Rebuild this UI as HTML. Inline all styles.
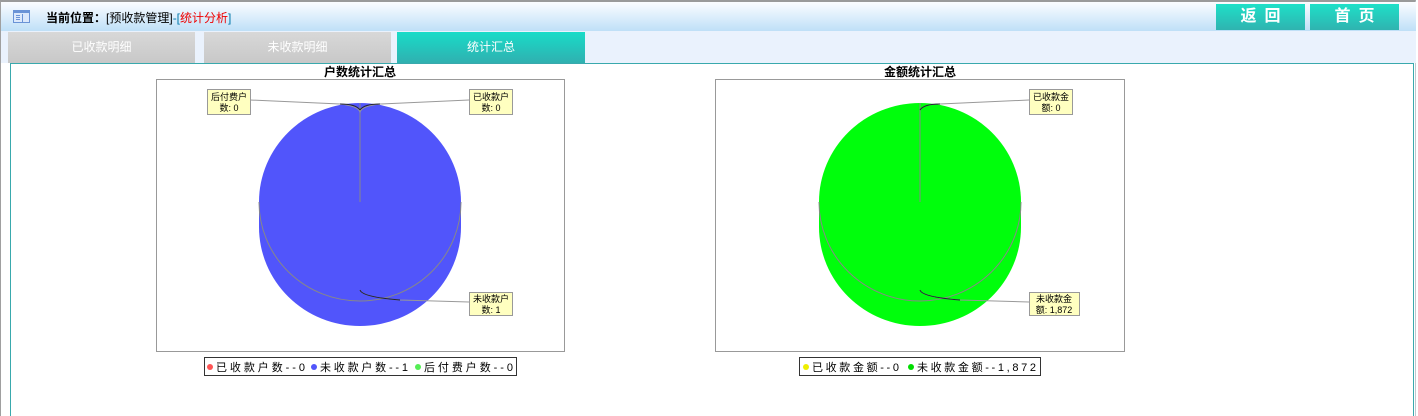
<!DOCTYPE html>
<html style="height:416px;overflow:hidden"><head><meta charset="utf-8"><style>
body{margin:0;width:1418px;height:416px;overflow:hidden;background:#fff;font-family:"Liberation Sans","Noto Sans CJK SC",sans-serif;position:relative}
.frame{position:absolute;left:0;top:0;width:1416px;height:416px;border-left:1px solid #a0a0a0;border-right:1px solid #c0c8d0;border-top:2px solid #9a9a9a;box-sizing:border-box}
.hdr{position:absolute;left:1px;top:2px;width:1415px;height:29px;background:linear-gradient(#fbfdff,#d7ebfb 60%,#bfe0f7)}
.loc{position:absolute;left:46px;top:9px;font-size:12px;color:#000}
.btn{position:absolute;top:4px;width:89px;height:26px;background:linear-gradient(#1ee0c8,#2fb3b0);color:#fff;font-size:16px;font-weight:bold;text-align:center;line-height:26px;letter-spacing:8px;text-indent:8px}
.bar{position:absolute;left:1px;top:31px;width:1415px;height:32px;background:#eaf2fd}
.tab{position:absolute;top:32px;height:31px;width:187px;text-align:center;line-height:30px;font-size:12px;color:#fff;background:linear-gradient(#d8d8d8,#c8c8c8)}
.box{position:absolute;left:10px;top:63px;width:1404px;height:353px;border:1px solid #39a9ad;border-bottom:none;box-sizing:border-box;background:#fff}
</style></head><body>
<div class="frame"></div>
<div class="hdr"></div>
<svg style="position:absolute;left:13px;top:10px" width="18" height="14"><rect x="0.5" y="0.5" width="16" height="12" fill="#dbe8fb" stroke="#6a93d6"/><rect x="1" y="1" width="15" height="2" fill="#6a93d6"/><rect x="3" y="5" width="4" height="1" fill="#6a93d6"/><rect x="3" y="7" width="4" height="1" fill="#6a93d6"/><rect x="3" y="9" width="4" height="1" fill="#6a93d6"/><rect x="9" y="4" width="1" height="8" fill="#6a93d6"/></svg>
<div class="loc"><b>当前位置：</b>[预收款管理]<span style="color:#07a">-[</span><span style="color:#e00">统计分析</span><span style="color:#07a">]</span></div>
<div class="btn" style="left:1216px">返回</div>
<div class="btn" style="left:1310px">首页</div>
<div class="bar"></div>
<div class="tab" style="left:8px">已收款明细</div>
<div class="tab" style="left:204px">未收款明细</div>
<div class="tab" style="left:397px;width:188px;background:linear-gradient(#18dcc8,#30b0b0)">统计汇总</div>
<div class="box"></div>
<svg style="position:absolute;left:0;top:0" width="1418" height="416" font-family="Liberation Sans,Noto Sans CJK SC,sans-serif">
<g>
<text x="360" y="76" font-size="12" font-weight="bold" text-anchor="middle">户数统计汇总</text>
<rect x="156.5" y="79.5" width="408" height="272" fill="#fff" stroke="#999"/>
<path d="M259 202 A101 99 0 0 1 461 202 L461 227 A101 99 0 0 1 259 227 Z" fill="#5155fb"/>
<path d="M259 202 A101 99 0 0 0 461 202" fill="none" stroke="#888" stroke-width="1"/>
<line x1="360" y1="103" x2="360" y2="202" stroke="#888"/>
<path d="M250 100 L340 104 Q358 106 360 112 Q362 106 380 104 L469 100" fill="none" stroke="#999"/>
<path d="M360 110 Q356 104 340 104 M360 110 Q364 104 380 104" fill="none" stroke="#223"/>
<path d="M360 290 Q362 297 400 300 L469 302" fill="none" stroke="#999"/>
<path d="M360 290 Q362 297 400 300" fill="none" stroke="#223"/>
<rect x="207.5" y="89.5" width="43" height="25" fill="#ffffc0" stroke="#999"/>
<text x="229" y="100" font-size="9" text-anchor="middle">后付费户</text><text x="229" y="111" font-size="9" text-anchor="middle">数: 0</text>
<rect x="469.5" y="89.5" width="43" height="25" fill="#ffffc0" stroke="#999"/>
<text x="491" y="100" font-size="9" text-anchor="middle">已收款户</text><text x="491" y="111" font-size="9" text-anchor="middle">数: 0</text>
<rect x="469.5" y="292.5" width="43" height="23" fill="#ffffc0" stroke="#999"/>
<text x="491" y="302" font-size="9" text-anchor="middle">未收款户</text><text x="491" y="313" font-size="9" text-anchor="middle">数: 1</text>
<rect x="204.5" y="357.5" width="312" height="18" fill="#fff" stroke="#333"/>
<circle cx="210" cy="367" r="3" fill="#f55"/><text x="216" y="371" font-size="11" textLength="89" lengthAdjust="spacing">已收款户数--0</text>
<circle cx="314" cy="367" r="3" fill="#5155fb"/><text x="320" y="371" font-size="11" textLength="88" lengthAdjust="spacing">未收款户数--1</text>
<circle cx="418" cy="367" r="3" fill="#5e5"/><text x="424" y="371" font-size="11" textLength="89" lengthAdjust="spacing">后付费户数--0</text>
</g>
<g>
<text x="920" y="76" font-size="12" font-weight="bold" text-anchor="middle">金额统计汇总</text>
<rect x="715.5" y="79.5" width="409" height="272" fill="#fff" stroke="#999"/>
<path d="M819 202 A101 99 0 0 1 1021 202 L1021 227 A101 99 0 0 1 819 227 Z" fill="#00fe0c"/>
<path d="M819 202 A101 99 0 0 0 1021 202" fill="none" stroke="#888"/>
<line x1="920" y1="103" x2="920" y2="202" stroke="#888"/>
<path d="M920 110 Q924 104 940 104 L1029 100" fill="none" stroke="#999"/>
<path d="M920 110 Q924 104 940 104" fill="none" stroke="#223"/>
<path d="M920 290 Q922 297 960 300 L1029 302" fill="none" stroke="#999"/>
<path d="M920 290 Q922 297 960 300" fill="none" stroke="#223"/>
<rect x="1029.5" y="89.5" width="43" height="25" fill="#ffffc0" stroke="#999"/>
<text x="1051" y="100" font-size="9" text-anchor="middle">已收款金</text><text x="1051" y="111" font-size="9" text-anchor="middle">额: 0</text>
<rect x="1029.5" y="292.5" width="50" height="23" fill="#ffffc0" stroke="#999"/>
<text x="1054" y="302" font-size="9" text-anchor="middle">未收款金</text><text x="1054" y="313" font-size="9" text-anchor="middle">额: 1,872</text>
<rect x="799.5" y="357.5" width="241" height="18" fill="#fff" stroke="#333"/>
<circle cx="806" cy="367" r="3" fill="#ee0"/><text x="812" y="371" font-size="11" textLength="87" lengthAdjust="spacing">已收款金额--0</text>
<circle cx="911" cy="367" r="3" fill="#0d0"/><text x="917" y="371" font-size="11" textLength="119" lengthAdjust="spacing">未收款金额--1,872</text>
</g>
</svg>
</body></html>
